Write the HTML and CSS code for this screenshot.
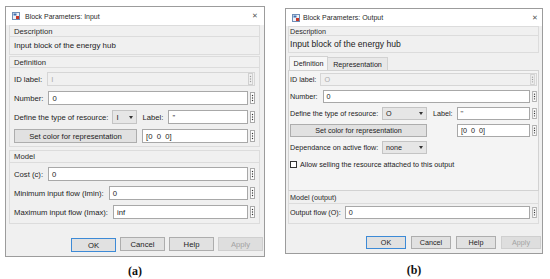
FILE: index.html
```html
<!DOCTYPE html>
<html>
<head>
<meta charset="utf-8">
<title>Block Parameters</title>
<link rel="stylesheet" href="styles.css">
</head>
<body>
<div class="page">
  <div class="fig fig-a">
    <div class="dlg dlg-a">
      <div class="titlebar">
        <svg class="ticon" viewBox="0 0 8 8"><rect x=".5" y=".5" width="7" height="7" fill="#eef2f8" stroke="#6f8fb8"/><rect x="1.5" y="1.5" width="3" height="2" fill="#3d6fb0"/><rect x="4" y="4" width="3" height="3" fill="#c8372a"/></svg>
        <span class="ttext">Block Parameters: Input</span>
        <span class="close">✕</span>
      </div>
      <div class="dbody">
        <div class="grp desc">
          <div class="ghead">Description</div>
          <div class="gtext">Input block of the energy hub</div>
        </div>
        <div class="grp def">
          <div class="ghead">Definition</div>
          <div class="rows">
            <div class="row"><span class="lbl">ID label:</span><div class="inp dis"><span>I</span><svg class="keb" viewBox="0 0 5 12"><rect x=".5" y=".5" width="4" height="11" fill="none" stroke="#aaa"/><circle cx="2.5" cy="3.5" r=".7"/><circle cx="2.5" cy="6" r=".7"/><circle cx="2.5" cy="8.5" r=".7"/></svg></div></div>
            <div class="row"><span class="lbl">Number:</span><div class="inp">0</div><svg class="keb" viewBox="0 0 5 12"><rect x=".5" y=".5" width="4" height="11" fill="#fff" stroke="#aaa"/><circle cx="2.5" cy="3.5" r=".7"/><circle cx="2.5" cy="6" r=".7"/><circle cx="2.5" cy="8.5" r=".7"/></svg></div>
            <div class="row"><span class="lbl tight">Define the type of resource:</span><div class="dd dd-a"><span>I</span><span class="caret"></span></div><span class="lbl2">Label:</span><div class="inp">''</div><svg class="keb" viewBox="0 0 5 12"><rect x=".5" y=".5" width="4" height="11" fill="#fff" stroke="#aaa"/><circle cx="2.5" cy="3.5" r=".7"/><circle cx="2.5" cy="6" r=".7"/><circle cx="2.5" cy="8.5" r=".7"/></svg></div>
            <div class="row"><div class="btn setc">Set color for representation</div><div class="inp inp-c">[0&nbsp;&nbsp;0&nbsp;&nbsp;0]</div><svg class="keb" viewBox="0 0 5 12"><rect x=".5" y=".5" width="4" height="11" fill="#fff" stroke="#aaa"/><circle cx="2.5" cy="3.5" r=".7"/><circle cx="2.5" cy="6" r=".7"/><circle cx="2.5" cy="8.5" r=".7"/></svg></div>
          </div>
        </div>
        <div class="grp model">
          <div class="ghead">Model</div>
          <div class="rows">
            <div class="row"><span class="lbl">Cost (c):</span><div class="inp">0</div><svg class="keb" viewBox="0 0 5 12"><rect x=".5" y=".5" width="4" height="11" fill="#fff" stroke="#aaa"/><circle cx="2.5" cy="3.5" r=".7"/><circle cx="2.5" cy="6" r=".7"/><circle cx="2.5" cy="8.5" r=".7"/></svg></div>
            <div class="row"><span class="lbl">Minimum input flow (Imin):</span><div class="inp">0</div><svg class="keb" viewBox="0 0 5 12"><rect x=".5" y=".5" width="4" height="11" fill="#fff" stroke="#aaa"/><circle cx="2.5" cy="3.5" r=".7"/><circle cx="2.5" cy="6" r=".7"/><circle cx="2.5" cy="8.5" r=".7"/></svg></div>
            <div class="row"><span class="lbl">Maximum input flow (Imax):</span><div class="inp">inf</div><svg class="keb" viewBox="0 0 5 12"><rect x=".5" y=".5" width="4" height="11" fill="#fff" stroke="#aaa"/><circle cx="2.5" cy="3.5" r=".7"/><circle cx="2.5" cy="6" r=".7"/><circle cx="2.5" cy="8.5" r=".7"/></svg></div>
          </div>
        </div>
      </div>
      <div class="btns">
        <div class="btn def">OK</div>
        <div class="btn">Cancel</div>
        <div class="btn">Help</div>
        <div class="btn dis">Apply</div>
      </div>
    </div>
    <div class="cap">(a)</div>
  </div>

  <div class="fig fig-b">
    <div class="dlg dlg-b">
      <div class="titlebar">
        <svg class="ticon" viewBox="0 0 8 8"><rect x=".5" y=".5" width="7" height="7" fill="#eef2f8" stroke="#6f8fb8"/><rect x="1.5" y="1.5" width="3" height="2" fill="#3d6fb0"/><rect x="4" y="4" width="3" height="3" fill="#c8372a"/></svg>
        <span class="ttext">Block Parameters: Output</span>
        <span class="close">✕</span>
      </div>
      <div class="dbody">
        <div class="grp desc">
          <div class="ghead">Description</div>
          <div class="gtext">Input block of the energy hub</div>
        </div>
        <div class="tabs">
          <div class="tab sel">Definition</div>
          <div class="tab">Representation</div>
        </div>
        <div class="tabpanel">
          <div class="rows">
            <div class="row"><span class="lbl tight">ID label:</span><div class="inp dis"><span>O</span><svg class="keb" viewBox="0 0 5 12"><rect x=".5" y=".5" width="4" height="11" fill="none" stroke="#aaa"/><circle cx="2.5" cy="3.5" r=".7"/><circle cx="2.5" cy="6" r=".7"/><circle cx="2.5" cy="8.5" r=".7"/></svg></div></div>
            <div class="row"><span class="lbl">Number:</span><div class="inp">0</div><svg class="keb" viewBox="0 0 5 12"><rect x=".5" y=".5" width="4" height="11" fill="#fff" stroke="#aaa"/><circle cx="2.5" cy="3.5" r=".7"/><circle cx="2.5" cy="6" r=".7"/><circle cx="2.5" cy="8.5" r=".7"/></svg></div>
            <div class="row"><span class="lbl wcol">Define the type of resource:</span><div class="dd dd-b"><span>O</span><span class="caret"></span></div><span class="lbl2">Label:</span><div class="inp">''</div><svg class="keb" viewBox="0 0 5 12"><rect x=".5" y=".5" width="4" height="11" fill="#fff" stroke="#aaa"/><circle cx="2.5" cy="3.5" r=".7"/><circle cx="2.5" cy="6" r=".7"/><circle cx="2.5" cy="8.5" r=".7"/></svg></div>
            <div class="row"><div class="btn setc">Set color for representation</div><div class="inp inp-c">[0&nbsp;&nbsp;0&nbsp;&nbsp;0]</div><svg class="keb" viewBox="0 0 5 12"><rect x=".5" y=".5" width="4" height="11" fill="#fff" stroke="#aaa"/><circle cx="2.5" cy="3.5" r=".7"/><circle cx="2.5" cy="6" r=".7"/><circle cx="2.5" cy="8.5" r=".7"/></svg></div>
            <div class="row"><span class="lbl wcol">Dependance on active flow:</span><div class="dd dd-b"><span>none</span><span class="caret"></span></div></div>
            <div class="row"><span class="chk"></span><span>Allow selling the resource attached to this output</span></div>
          </div>
        </div>
        <div class="grp model">
          <div class="ghead">Model (output)</div>
          <div class="rows">
            <div class="row"><span class="lbl tight">Output flow (O):</span><div class="inp">0</div><svg class="keb" viewBox="0 0 5 12"><rect x=".5" y=".5" width="4" height="11" fill="#fff" stroke="#aaa"/><circle cx="2.5" cy="3.5" r=".7"/><circle cx="2.5" cy="6" r=".7"/><circle cx="2.5" cy="8.5" r=".7"/></svg></div>
          </div>
        </div>
      </div>
      <div class="btns">
        <div class="btn def">OK</div>
        <div class="btn">Cancel</div>
        <div class="btn">Help</div>
        <div class="btn dis">Apply</div>
      </div>
    </div>
    <div class="cap">(b)</div>
  </div>
</div>
</body>
</html>
```

FILE: styles.css
```css
* { box-sizing: border-box; margin: 0; padding: 0; }
html, body { width: 550px; height: 279px; overflow: hidden; background: #fff; }
body { font-family: "Liberation Sans", Arial, sans-serif; color: #1c1c1c; }

.page { display: flex; align-items: flex-start; }
.fig { display: flex; flex-direction: column; flex: none; }
.fig-a { margin: 6px 0 0 5px; width: 260px; }
.fig-b { margin: 8px 0 0 20px; width: 258px; }

.cap {
  font-family: "Liberation Serif", "Times New Roman", serif;
  font-weight: bold; font-size: 12px; line-height: 12px;
  text-align: center; color: #111;
}
.fig-a .cap { margin-top: 8px; }
.fig-b .cap { margin-top: 10px; }

.dlg {
  background: #f0f0f0; border: 1px solid #9c9c9c;
  display: flex; flex-direction: column; white-space: nowrap;
}
.dlg-a { height: 251px; font-size: 7.7px; --px: 4px; --rh: 14px; --rg: 5px; }
.dlg-b { height: 246px; font-size: 7.2px; --px: 1px; --rh: 13px; --rg: 4px; }

.titlebar { background: #fff; display: flex; align-items: center; flex: none; }
.dlg-a .titlebar { height: 18px; padding: 0 6px 0 6px; }
.dlg-b .titlebar { height: 17px; padding: 0 4px 0 6px; }
.ticon { width: 8px; height: 8px; flex: none; margin-right: 5px; }
.dlg-b .ticon { margin-right: 3px; }
.ttext { font-size: 7px; flex: 1; color: #2a2a2a; }
.close { font-size: 7px; color: #555; }

.dbody { display: flex; flex-direction: column; flex: none; }
.dlg-a .dbody { padding: 0 4px 0 3px; }
.dlg-b .dbody { padding: 0 3px 0 2px; }

.grp { border: 1px solid #dcdcdc; }
.ghead {
  display: flex; align-items: center;
  padding: 0 var(--px); border-bottom: 1px solid #dcdcdc; color: #2a2a2a;
}
.gtext { display: flex; align-items: center; padding: 0 var(--px); }
.rows { display: flex; flex-direction: column; gap: var(--rg); padding: 0 var(--px); }

.dlg-a .desc .ghead { height: 11px; }
.dlg-a .desc .gtext { height: 17px; font-size: 7.9px; }
.dlg-a .def { margin-top: 1px; }
.dlg-a .def .ghead { height: 11px; }
.dlg-a .def .rows { padding-top: 4px; padding-bottom: 3px; }
.dlg-a .model { margin-top: 3px; }
.dlg-a .model .ghead { height: 12px; }
.dlg-a .model .rows { padding-top: 4px; padding-bottom: 4px; }

.dlg-b .desc .ghead { height: 9px; }
.dlg-b .desc .gtext { height: 16px; font-size: 8.6px; }

.tabs { display: flex; margin: 3px 0 0 1px; height: 14px; align-items: flex-end; }
.tab {
  border: 1px solid #d2d2d2; border-bottom: none;
  display: flex; align-items: center; justify-content: center;
}
.tab.sel { width: 39px; height: 14px; background: #f7f7f7; }
.tab:not(.sel) { width: 60px; height: 13px; background: #e8e8e8; border-left: none; }
.tabpanel { border: 1px solid #d2d2d2; background: #f4f4f4; height: 121px; }
.tabpanel .rows { padding-top: 2px; }
.dlg-b .model { border-top: none; }
.dlg-b .model .ghead { height: 13px; }
.dlg-b .model .rows { padding-top: 2px; padding-bottom: 4px; }

.row { display: flex; align-items: center; height: var(--rh); }
.lbl { margin-right: 5px; flex: none; }
.lbl.tight { margin-right: 4px; }
.dlg-b .lbl.wcol { width: 92px; margin-right: 0; }
.lbl2 { margin-left: 5px; margin-right: 5px; flex: none; }
.dlg-b .lbl2 { margin-left: 6px; margin-right: 4px; }

.inp {
  flex: 1; height: 100%; background: #fff; border: 1px solid #a8a8a8;
  padding-left: 3px; display: flex; align-items: center; min-width: 0;
}
.inp.dis {
  background: #f0f0f0; border-color: #d6d6d6; color: #ababab;
  justify-content: space-between; padding-right: 1px;
}
.inp.dis .keb { opacity: .45; margin-left: 0; }
.dlg-b .inp-c { margin-left: 30px; }
.dlg-a .inp-c { margin-left: 5px; }

.keb { width: 5px; height: 12px; flex: none; margin-left: 2px; fill: #333; }
.dlg-b .keb { height: 11px; }

.dd {
  height: 100%; flex: none; display: flex; align-items: center;
  justify-content: space-between; background: #e6e6e6; border: 1px solid #c4c4c4;
  padding: 0 3px 0 3px;
}
.dd-a { width: 25px; }
.dd-b { width: 45px; }
.caret {
  width: 0; height: 0; border-left: 2px solid transparent;
  border-right: 2px solid transparent; border-top: 3px solid #333;
}

.btn {
  background: #e1e1e1; border: 1px solid #adadad; height: 100%;
  display: flex; align-items: center; justify-content: center; flex: none;
}
.dlg-a .setc { width: 123px; }
.dlg-b .setc { width: 137px; }

.chk { width: 7px; height: 7px; border: 1px solid #333; background: #fff; margin-right: 3px; flex: none; }

.btns { display: flex; justify-content: flex-end; padding-right: 1px; flex: none; }
.dlg-a .btns { margin-top: 13px; height: 14px; gap: 4px; }
.dlg-a .btns .btn { width: 45px; }
.dlg-b .btns { margin-top: 12px; height: 13px; gap: 5px; }
.dlg-b .btns .btn { width: 40px; }
.btn.def { border-color: #3d8ad6; }
.btn.dis { color: #a3a3a3; background: #dedede; border-color: #cfcfcf; }
```
